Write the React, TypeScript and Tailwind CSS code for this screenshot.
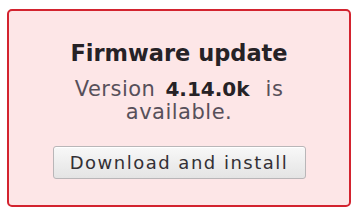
import React from 'react';

export default function App() {
  return (
    <div className="w-[356px] h-[212px] bg-white pt-[9px] pl-[7px] font-['DejaVu_Sans',Verdana,sans-serif]">
      {/* Firmware notice box */}
      <div className="w-[344px] h-[198px] rounded-[5px] border-2 border-[#d3232f] bg-[#fde6e7] flex flex-col items-center pt-[28px]">
        <h2 className="text-[22.5px] leading-[28px] font-bold text-[#262226]">Firmware update</h2>
        <p className="mt-[11px] text-center text-[21px] leading-[23px] tracking-[0.5px] text-[#57505a]">
          Version
          <span className="ml-[10px] text-[20px] font-bold tracking-normal text-[#262226]">4.14.0k</span>
          <span className="ml-[16px]">is</span>
          <br />
          available.
        </p>
        <button className="mt-[22px] w-[253px] h-[33px] rounded-[3px] border border-[#b9b6b8] bg-gradient-to-b from-[#f8f8f8] to-[#e4e4e4] text-[18px] leading-[20px] tracking-[1.5px] text-[#333035] shadow-[inset_0_1px_0_#ffffff]">
          Download and install
        </button>
      </div>
    </div>
  );
}
